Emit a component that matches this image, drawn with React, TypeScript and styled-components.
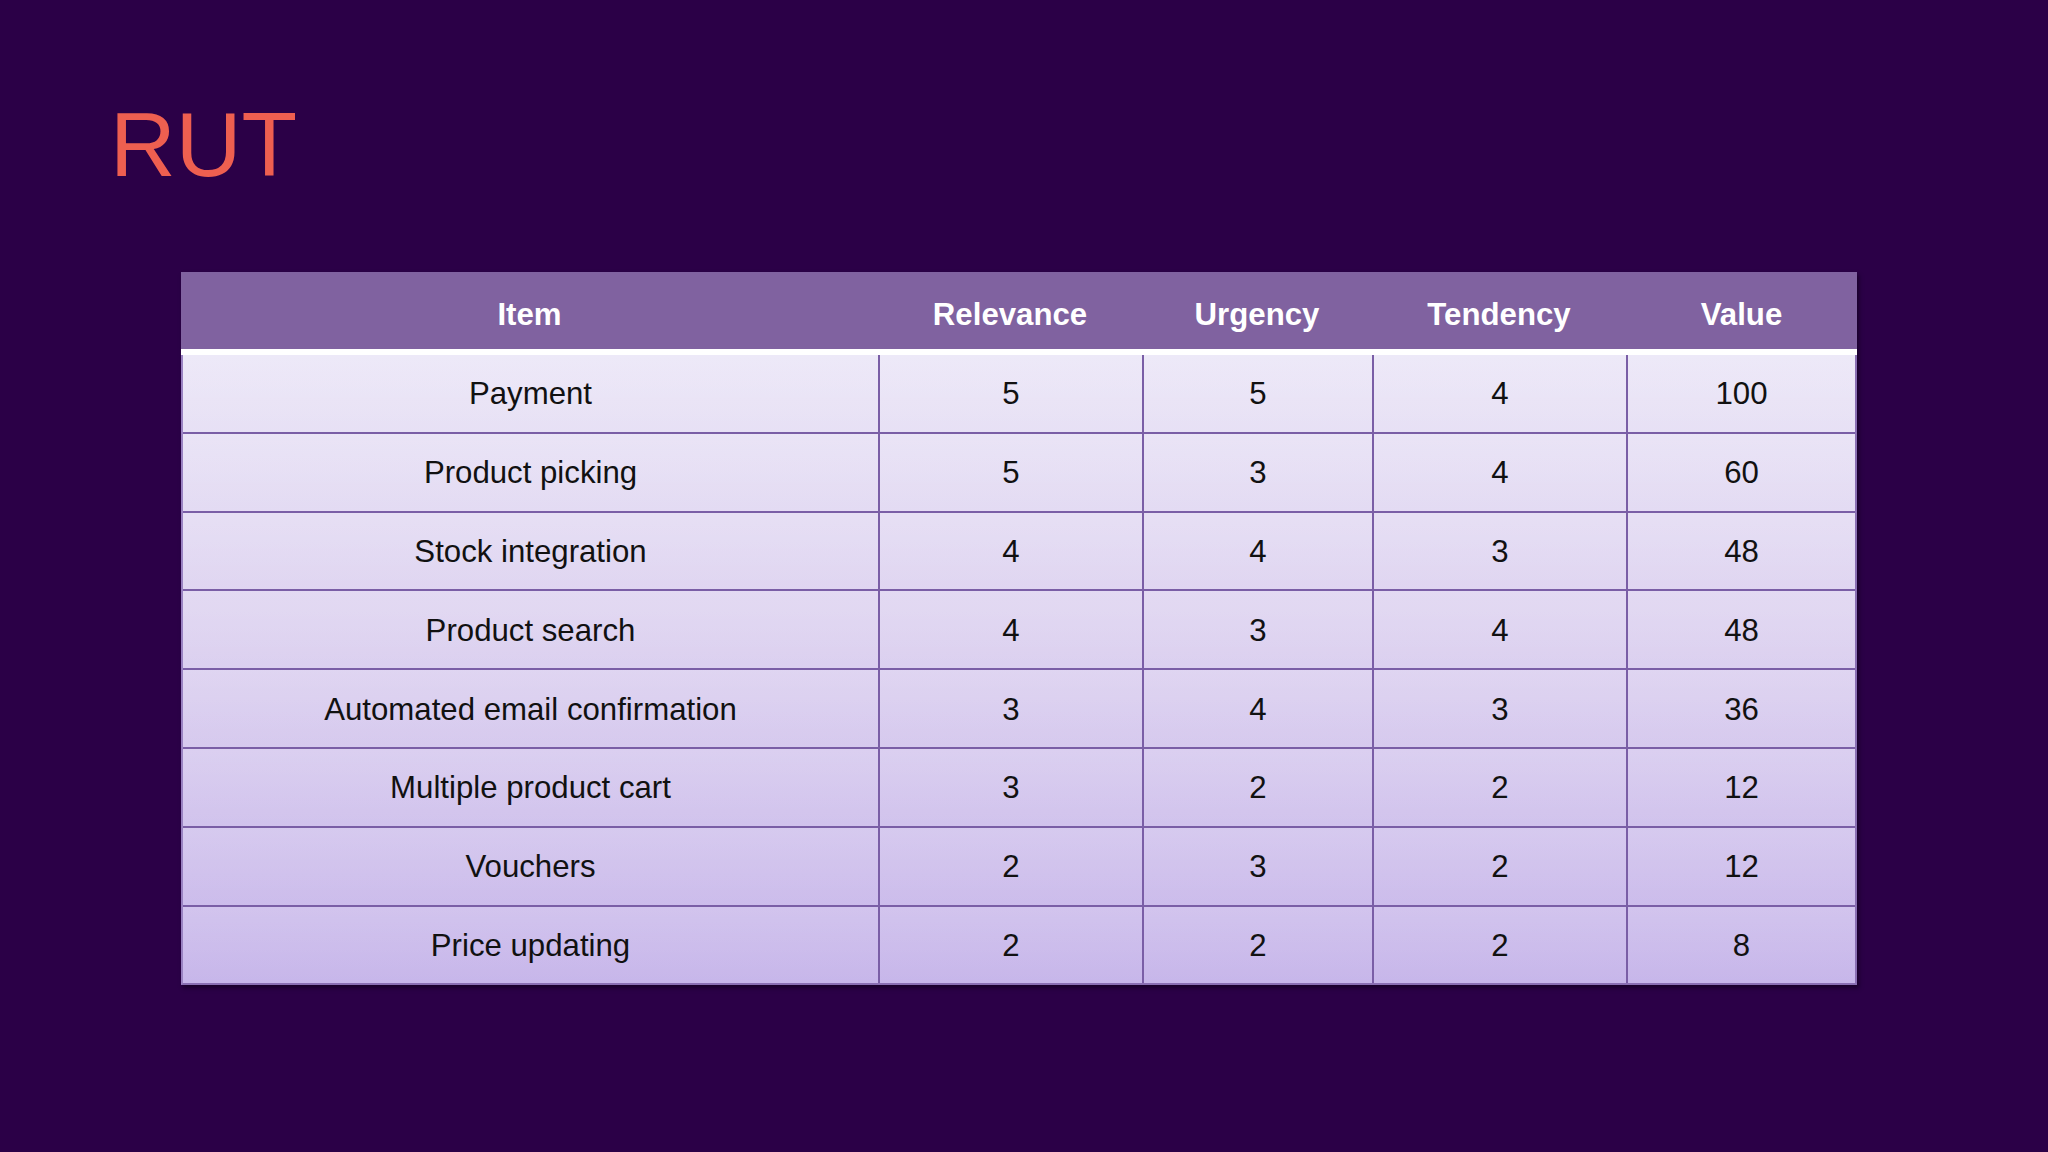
import React from "react";
import styled, { createGlobalStyle } from "styled-components";

const Global = createGlobalStyle`
  html, body {
    margin: 0;
    padding: 0;
    background: #2b0047;
  }
  body {
    font-family: "Liberation Sans", Arial, sans-serif;
  }
`;

const Slide = styled.div`
  width: 2048px;
  height: 1152px;
  background: #2b0047;
  box-sizing: border-box;
  padding: 99px 0 0 110px;
  display: flex;
  flex-direction: column;
`;

const Title = styled.h1`
  margin: 0;
  font-family: "Liberation Sans", Arial, sans-serif;
  font-weight: 400;
  font-size: 91px;
  line-height: 91px;
  color: #ee5f50;
`;

const Table = styled.div`
  margin: 82px 0 0 71px;
  width: 1676px;
  box-shadow: 2px 3px 4px rgba(10, 0, 20, 0.55);
`;

const COLS = "697px 264px 230px 254px 231px";

const HeadRow = styled.div`
  display: grid;
  grid-template-columns: ${COLS};
  height: 77px;
  background: #8062a0;
  border-bottom: 6px solid #ffffff;
`;

const HeadCell = styled.div`
  display: flex;
  align-items: center;
  justify-content: center;
  padding-top: 8px;
  box-sizing: border-box;
  color: #ffffff;
  font-weight: 700;
  font-size: 31.2px;
`;

const Body = styled.div`
  background: linear-gradient(180deg, #ebe6f7 0%, #ddd2f0 45%, #c7b6ea 100%);
  border-left: 2px solid #9a82c2;
  border-right: 2px solid #8a6fb3;
  border-bottom: 2px solid #8a6fb3;
`;

const Row = styled.div<{ $last?: boolean }>`
  display: grid;
  grid-template-columns: 695px 264px 230px 254px 229px;
  height: 76.8px;
  border-bottom: ${(p) => (p.$last ? "none" : "2px solid #7a5ea6")};
  box-sizing: content-box;
  background: linear-gradient(180deg, rgba(255, 255, 255, 0.12) 0%, rgba(255, 255, 255, 0) 100%);
`;

const Cell = styled.div<{ $first?: boolean }>`
  display: flex;
  align-items: center;
  justify-content: center;
  padding-top: 2px;
  box-sizing: border-box;
  border-left: ${(p) => (p.$first ? "none" : "2px solid #7a5ea6")};
  color: #111111;
  font-size: 31.2px;
`;

const rows: [string, number, number, number, number][] = [
  ["Payment", 5, 5, 4, 100],
  ["Product picking", 5, 3, 4, 60],
  ["Stock integration", 4, 4, 3, 48],
  ["Product search", 4, 3, 4, 48],
  ["Automated email confirmation", 3, 4, 3, 36],
  ["Multiple product cart", 3, 2, 2, 12],
  ["Vouchers", 2, 3, 2, 12],
  ["Price updating", 2, 2, 2, 8],
];

const headers = ["Item", "Relevance", "Urgency", "Tendency", "Value"];

export default function App() {
  return (
    <>
      <Global />
      <Slide>
        <Title>RUT</Title>
        <Table>
          <HeadRow>
            {headers.map((h) => (
              <HeadCell key={h}>{h}</HeadCell>
            ))}
          </HeadRow>
          <Body>
            {rows.map((r, i) => (
              <Row key={r[0]} $last={i === rows.length - 1}>
                {r.map((v, j) => (
                  <Cell key={j} $first={j === 0}>
                    {v}
                  </Cell>
                ))}
              </Row>
            ))}
          </Body>
        </Table>
      </Slide>
    </>
  );
}
